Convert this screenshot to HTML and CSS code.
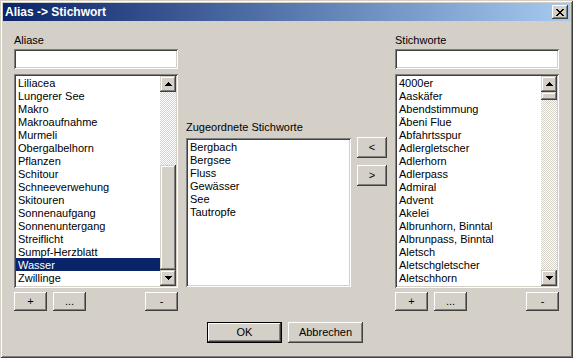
FILE: index.html
```html
<!DOCTYPE html>
<html>
<head>
<meta charset="utf-8">
<link rel="stylesheet" href="styles.css">
</head>
<body>
<div class="window">
  <div class="titlebar">
    <span class="title">Alias -&gt; Stichwort</span>
    <button class="close"><svg width="8" height="7" viewBox="0 0 8 7" shape-rendering="crispEdges"><path d="M0 0h2v1h-2zM6 0h2v1h-2zM1 1h2v1h-2zM5 1h2v1h-2zM2 2h4v1h-4zM3 3h2v1h-2zM2 4h4v1h-4zM1 5h2v1h-2zM5 5h2v1h-2zM0 6h2v1h-2zM6 6h2v1h-2z" fill="#000"/></svg></button>
  </div>
  <div class="main">
    <div class="col side">
      <div class="label">Aliase</div>
      <input class="field" type="text">
      <div class="listbox tall">
        <div class="items">
          <div class="item">Liliacea</div>
          <div class="item">Lungerer See</div>
          <div class="item">Makro</div>
          <div class="item">Makroaufnahme</div>
          <div class="item">Murmeli</div>
          <div class="item">Obergalbelhorn</div>
          <div class="item">Pflanzen</div>
          <div class="item">Schitour</div>
          <div class="item">Schneeverwehung</div>
          <div class="item">Skitouren</div>
          <div class="item">Sonnenaufgang</div>
          <div class="item">Sonnenuntergang</div>
          <div class="item">Streiflicht</div>
          <div class="item">Sumpf-Herzblatt</div>
          <div class="item selected">Wasser</div>
          <div class="item">Zwillinge</div>
        </div>
        <div class="scrollbar">
          <div class="sbtn"><svg width="7" height="4" viewBox="0 0 7 4" shape-rendering="crispEdges"><path d="M3 0h1v1h-1zM2 1h3v1h-3zM1 2h5v1h-5zM0 3h7v1h-7z" fill="#000"/></svg></div>
          <div class="track track-a"></div>
          <div class="thumb thumb-a"></div>
          <div class="sbtn"><svg width="7" height="4" viewBox="0 0 7 4" shape-rendering="crispEdges"><path d="M0 0h7v1h-7zM1 1h5v1h-5zM2 2h3v1h-3zM3 3h1v1h-1z" fill="#000"/></svg></div>
        </div>
      </div>
      <div class="btnrow">
        <button class="btn small">+</button>
        <button class="btn small">...</button>
        <button class="btn small push">-</button>
      </div>
    </div>

    <div class="col middle">
      <div class="label">Zugeordnete Stichworte</div>
      <div class="listbox mid">
        <div class="items">
          <div class="item">Bergbach</div>
          <div class="item">Bergsee</div>
          <div class="item">Fluss</div>
          <div class="item">Gewässer</div>
          <div class="item">See</div>
          <div class="item">Tautropfe</div>
        </div>
      </div>
    </div>

    <div class="col arrows">
      <button class="btn arrow">&lt;</button>
      <button class="btn arrow">&gt;</button>
    </div>

    <div class="col side right">
      <div class="label">Stichworte</div>
      <input class="field" type="text">
      <div class="listbox tall">
        <div class="items">
          <div class="item">4000er</div>
          <div class="item">Aaskäfer</div>
          <div class="item">Abendstimmung</div>
          <div class="item">Äbeni Flue</div>
          <div class="item">Abfahrtsspur</div>
          <div class="item">Adlergletscher</div>
          <div class="item">Adlerhorn</div>
          <div class="item">Adlerpass</div>
          <div class="item">Admiral</div>
          <div class="item">Advent</div>
          <div class="item">Akelei</div>
          <div class="item">Albrunhorn, Binntal</div>
          <div class="item">Albrunpass, Binntal</div>
          <div class="item">Aletsch</div>
          <div class="item">Aletschgletscher</div>
          <div class="item">Aletschhorn</div>
          <div class="item">Allalinhorn</div>
        </div>
        <div class="scrollbar">
          <div class="sbtn"><svg width="7" height="4" viewBox="0 0 7 4" shape-rendering="crispEdges"><path d="M3 0h1v1h-1zM2 1h3v1h-3zM1 2h5v1h-5zM0 3h7v1h-7z" fill="#000"/></svg></div>
          <div class="thumb thumb-b"></div>
          <div class="track track-b"></div>
          <div class="sbtn"><svg width="7" height="4" viewBox="0 0 7 4" shape-rendering="crispEdges"><path d="M0 0h7v1h-7zM1 1h5v1h-5zM2 2h3v1h-3zM3 3h1v1h-1z" fill="#000"/></svg></div>
        </div>
      </div>
      <div class="btnrow">
        <button class="btn small">+</button>
        <button class="btn small">...</button>
        <button class="btn small push">-</button>
      </div>
    </div>
  </div>
  <div class="footer">
    <button class="btn dlg default">OK</button>
    <button class="btn dlg">Abbrechen</button>
  </div>
</div>
</body>
</html>
```
FILE: styles.css
```css
html, body {
  margin: 0;
  padding: 0;
  background: #d4d0c8;
}
.window {
  width: 573px;
  height: 358px;
  box-sizing: border-box;
  padding: 3px;
  background: #d4d0c8;
  box-shadow: inset 1px 1px #d4d0c8, inset -1px -1px #404040, inset 2px 2px #ffffff, inset -2px -2px #808080;
  font-family: "Liberation Sans", Arial, sans-serif;
  font-size: 11px;
  color: #000;
  display: flex;
  flex-direction: column;
  overflow: hidden;
}
.titlebar {
  height: 18px;
  flex: none;
  background: linear-gradient(to right, #0a246a, #a6caf0);
  display: flex;
  align-items: center;
  justify-content: space-between;
  padding: 0 2px;
}
.title {
  color: #fff;
  font-weight: bold;
  font-size: 12px;
  line-height: 18px;
}
.close {
  width: 16px;
  height: 14px;
  border: none;
  padding: 0;
  margin: 0;
  background: #d4d0c8;
  box-shadow: inset -1px -1px #404040, inset 1px 1px #ffffff, inset -2px -2px #808080;
  display: flex;
  align-items: center;
  justify-content: center;
}
.close svg { display: block; margin-left: 0px; }
.main {
  display: flex;
  align-items: flex-start;
  margin-top: 13px;
  padding-left: 11px;
}
.col {
  display: flex;
  flex-direction: column;
}
.side { width: 164px; }
.middle { width: 165px; margin-left: 8px; margin-top: 87px; }
.arrows { width: 30px; margin-left: 6px; margin-top: 103px; gap: 7px; }
.right { margin-left: 8px; }
.label {
  height: 13px;
  line-height: 13px;
  white-space: nowrap;
}
.field {
  display: block;
  width: 164px;
  height: 20px;
  box-sizing: border-box;
  margin: 2px 0 0 0;
  padding: 0 3px;
  border: none;
  outline: none;
  background: #fff;
  font: inherit;
  box-shadow: inset 1px 1px #808080, inset -1px -1px #ffffff, inset 2px 2px #404040, inset -2px -2px #d4d0c8;
}
.listbox {
  box-sizing: border-box;
  padding: 2px;
  background: #fff;
  box-shadow: inset 1px 1px #808080, inset -1px -1px #ffffff, inset 2px 2px #404040, inset -2px -2px #d4d0c8;
  display: flex;
}
.tall { height: 214px; margin-top: 5px; }
.mid { height: 149px; margin-top: 4px; }
.items {
  flex: 1;
  overflow: hidden;
  background: #fff;
}
.item {
  height: 13px;
  line-height: 14px;
  padding-left: 2px;
  white-space: nowrap;
  overflow: hidden;
}
.selected {
  background: #0a246a;
  color: #fff;
}
.scrollbar {
  width: 16px;
  flex: none;
  display: flex;
  flex-direction: column;
}
.sbtn {
  width: 16px;
  height: 16px;
  flex: none;
  box-sizing: border-box;
  background: #d4d0c8;
  box-shadow: inset -1px -1px #404040, inset 1px 1px #d4d0c8, inset -2px -2px #808080, inset 2px 2px #ffffff;
  display: flex;
  align-items: center;
  justify-content: center;
}
.sbtn svg { display: block; }
.track {
  background: repeating-conic-gradient(#d4d0c8 0 25%, #ffffff 0 50%) 0 0 / 2px 2px;
}
.track-a { height: 73px; flex: none; }
.track-b { flex: 1; }
.thumb {
  flex: none;
  background: #d4d0c8;
  box-shadow: inset -1px -1px #404040, inset 1px 1px #d4d0c8, inset -2px -2px #808080, inset 2px 2px #ffffff;
}
.thumb-a { height: 105px; }
.thumb-b { height: 8px; }
.btn {
  border: none;
  padding: 0;
  margin: 0;
  background: #d4d0c8;
  font: inherit;
  color: #000;
  box-shadow: inset -1px -1px #404040, inset 1px 1px #ffffff, inset -2px -2px #808080, inset 2px 2px #d4d0c8;
  display: flex;
  align-items: center;
  justify-content: center;
  line-height: 13px;
}
.btnrow {
  display: flex;
  gap: 6px;
  margin-top: 4px;
}
.small { width: 33px; height: 19px; }
.push { margin-left: auto; }
.arrow { width: 30px; height: 21px; }
.footer {
  display: flex;
  justify-content: center;
  gap: 6px;
  margin-top: 11px;
  padding-right: 3px;
}
.dlg { width: 75px; height: 21px; }
.default {
  box-shadow: inset 0 0 0 1px #000000, inset -2px -2px #404040, inset 2px 2px #ffffff, inset -3px -3px #808080;
}
```
